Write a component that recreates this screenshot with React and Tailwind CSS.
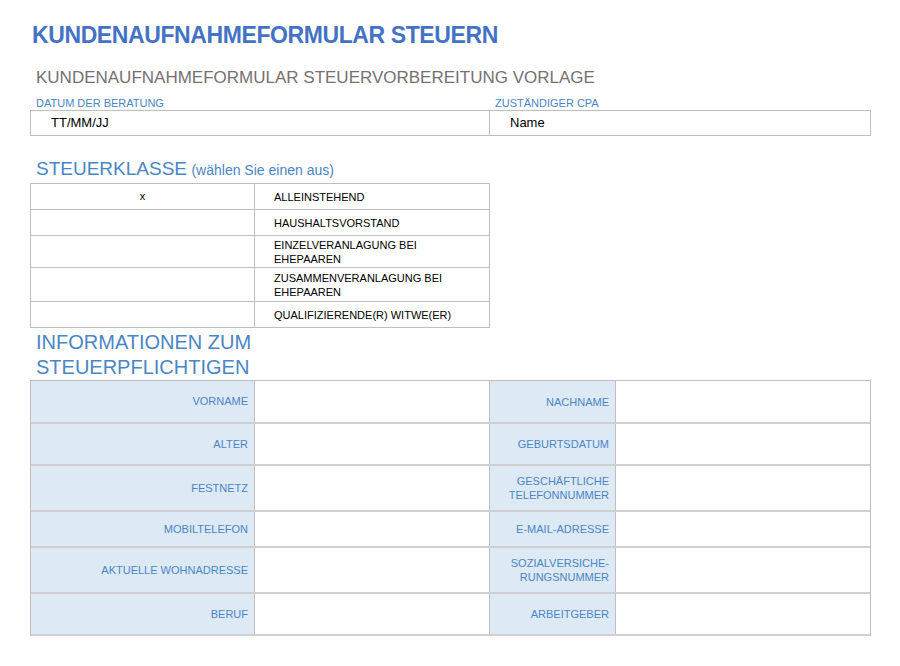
export default function App() {
  const font = { fontFamily: '"Liberation Sans", Arial, sans-serif' };
  const classes = [
    ["x", "ALLEINSTEHEND", "h-[26px]"],
    ["", "HAUSHALTSVORSTAND", "h-[26px]"],
    ["", "EINZELVERANLAGUNG BEI EHEPAAREN", "h-[32px]"],
    ["", "ZUSAMMENVERANLAGUNG BEI EHEPAAREN", "h-[34px]"],
    ["", "QUALIFIZIERENDE(R) WITWE(ER)", "h-[26px]"],
  ];
  const rows = [
    ["VORNAME", "NACHNAME", "h-[43px]"],
    ["ALTER", "GEBURTSDATUM", "h-[42px]"],
    ["FESTNETZ", "GESCHÄFTLICHE TELEFONNUMMER", "h-[46px]"],
    ["MOBILTELEFON", "E-MAIL-ADRESSE", "h-[36px]"],
    ["AKTUELLE WOHNADRESSE", "SOZIALVERSICHE-RUNGSNUMMER", "h-[46px]"],
    ["BERUF", "ARBEITGEBER", "h-[42px]"],
  ];
  return (
    <div className="w-[900px] h-[666px] bg-white pl-[30px] pr-[29px]" style={font}>
      <div className="pt-[18px] pl-[2px] text-[23px] font-bold text-[#4472c4] leading-[34px] tracking-[-0.4px]">KUNDENAUFNAHMEFORMULAR STEUERN</div>
      <div className="mt-[14px] pl-[6px] text-[17px] text-[#767171] leading-[24px]">KUNDENAUFNAHMEFORMULAR STEUERVORBEREITUNG VORLAGE</div>
      <div className="flex mt-[6px] text-[11px] text-[#4a86c5] leading-[14px]">
        <div className="w-[459px] pl-[6px]">DATUM DER BERATUNG</div>
        <div className="pl-[6px]">ZUSTÄNDIGER CPA</div>
      </div>
      <div className="flex h-[26px] border border-[#bfbfbf] text-[13px] text-black">
        <div className="w-[459px] border-r border-[#bfbfbf] pl-[20px] flex items-center">TT/MM/JJ</div>
        <div className="pl-[20px] flex items-center">Name</div>
      </div>
      <div className="mt-[20px] pl-[6px] text-[#4a86c5] leading-[26px]"><span className="text-[19px]">STEUERKLASSE</span> <span className="text-[14px]">(wählen Sie einen aus)</span></div>
      <div className="w-[460px] border border-[#bfbfbf] border-b-0 text-[11px] text-black">
        {classes.map(([a, b, h], i) => (
          <div key={i} className={`flex border-b border-[#bfbfbf] ${h}`}>
            <div className="w-[224px] border-r border-[#bfbfbf] flex items-center justify-center">{a}</div>
            <div className="flex-1 pl-[19px] pr-[30px] flex items-center leading-[14px]">{b}</div>
          </div>
        ))}
      </div>
      <div className="mt-[2px] pl-[6px] text-[20px] text-[#4a86c5] leading-[25px]">INFORMATIONEN ZUM<br />STEUERPFLICHTIGEN</div>
      <div className="border border-[#bfbfbf] border-b-0 text-[11px] text-[#4a86c5]">
        {rows.map(([a, b, h], i) => (
          <div key={i} className={`flex border-b-2 border-[#d0d0d0] ${h}`}>
            <div className="w-[224px] bg-[#dde9f5] border-r border-[#bfbfbf] flex items-center justify-end pr-[6px] text-right">{a}</div>
            <div className="w-[235px] border-r border-[#bfbfbf]"></div>
            <div className="w-[126px] bg-[#dde9f5] border-r border-[#bfbfbf] flex items-center justify-end pr-[6px] pl-[10px] text-right leading-[14px]">{b}</div>
            <div className="flex-1"></div>
          </div>
        ))}
      </div>
    </div>
  );
}
